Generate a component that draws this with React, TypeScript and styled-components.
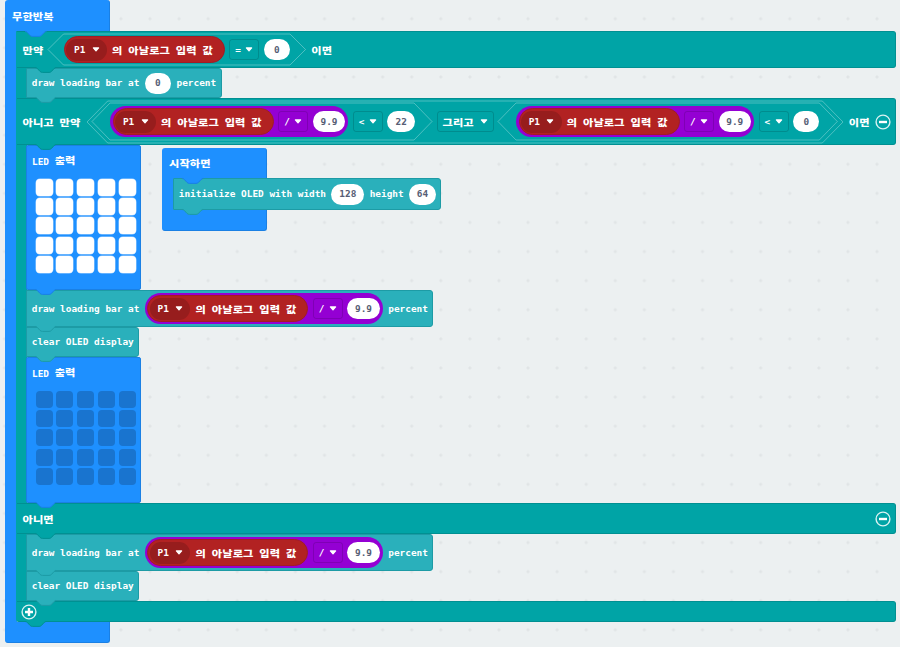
import * as React from 'react';
import styled, { createGlobalStyle } from 'styled-components';

const colors = {
  basic: '#1e90ff',
  basicEdge: '#1a80e4',
  logic: '#00a4a6',
  logicEdge: '#009092',
  oled: '#2ab0bb',
  oledEdge: '#1d9ba5',
  pins: '#b22222',
  math: '#9400d3',
};

const GlobalStyle = createGlobalStyle`
  body {
    margin: 0;
    overflow: hidden;
  }
  * {
    box-sizing: border-box;
  }
`;

const Workspace = styled.main`
  position: relative;
  width: 900px;
  height: 647px;
  overflow: hidden;
  background: #ecf0f1;
  font-family: 'DejaVu Sans Mono', 'Noto Sans CJK KR', monospace;
  font-size: 9.42px;
  font-weight: 700;
  line-height: 12px;
  color: #fff;
  white-space: pre;
`;

const Grid = styled.svg`
  position: absolute;
  inset: 0;
`;

const Script = styled.section<{ $x: number; $y: number }>`
  position: absolute;
  left: ${(props) => props.$x}px;
  top: ${(props) => props.$y}px;
`;

const HatBlock = styled.header<{ $height: number }>`
  display: flex;
  align-items: center;
  position: relative;
  width: 105px;
  height: ${(props) => props.$height}px;
  padding-left: 7px;
  background: ${colors.basic};
  border-right: 1px solid ${colors.basicEdge};
  border-radius: 3px 3px 0 0;
`;

const HatFoot = styled.footer`
  width: 105px;
  height: 21px;
  background: ${colors.basic};
  border: 1px solid ${colors.basicEdge};
  border-top: none;
  border-left-color: ${colors.basic};
  border-radius: 0 0 3px 3px;
`;

const Mouth = styled.div<{ $color: string; $arm: number }>`
  display: flex;
  flex-direction: column;
  align-items: flex-start;
  padding-left: ${(props) => props.$arm}px;
  background: linear-gradient(${(props) => props.$color}, ${(props) => props.$color})
    0 0 / ${(props) => props.$arm + 1}px 100% no-repeat;
`;

const LogicRow = styled.div<{ $height: number }>`
  display: flex;
  align-items: center;
  position: relative;
  width: 880px;
  height: ${(props) => props.$height}px;
  padding: 0 4.5px 0 5.5px;
  background: ${colors.logic};
  border: 1px solid ${colors.logicEdge};
  border-left-color: ${colors.logic};
  border-radius: 0 3px 3px 0;
`;

const Statement = styled.div<{ $height: number }>`
  display: flex;
  align-items: center;
  gap: 5.3px;
  position: relative;
  height: ${(props) => props.$height}px;
  padding: 0 4.4px 0 4.8px;
  background: ${colors.oled};
  border: 1px solid ${colors.oledEdge};
  border-radius: 1px 3px 3px 1px;
`;

const LedBlock = styled.div<{ $height: number }>`
  position: relative;
  width: 115px;
  height: ${(props) => props.$height}px;
  padding: 8px 0 0 5px;
  background: ${colors.basic};
  border: 1px solid ${colors.basicEdge};
  border-radius: 2px;
`;

const LedGrid = styled.div`
  display: grid;
  grid-template-columns: repeat(5, 17px);
  grid-auto-rows: 17px;
  gap: 2.4px 3.75px;
  margin: 10.5px 0 0 3.7px;
`;

const Led = styled.span<{ $on?: boolean }>`
  border-radius: 4px;
  background: ${(props) => (props.$on ? '#fff' : '#1974cf')};
  box-shadow: ${(props) => (props.$on ? '0 0 0 0.5px #a9d4ff' : 'none')};
`;

const Korean = styled.span`
  display: inline-block;
  font-family: 'Noto Sans CJK KR', sans-serif;
  font-size: 11.2px;
  font-weight: 900;
  letter-spacing: 0.1px;
  word-spacing: 3.2px;
  transform: scaleY(0.82);
`;

const Reporter = styled.span<{ $color: string; $height: number }>`
  display: flex;
  align-items: center;
  gap: 4.5px;
  height: ${(props) => props.$height}px;
  border-radius: 16px;
  background: ${(props) => props.$color};
`;

const MathReporter = styled(Reporter)`
  width: 238.3px;
  padding-left: 2.6px;
`;

const PinReporter = styled(Reporter)`
  width: 161px;
  padding-left: 1.5px;
  gap: 5.3px;
  border: 1px solid #a11c26;
`;

const PinField = styled.span`
  display: flex;
  align-items: center;
  gap: 6.3px;
  width: 40.5px;
  height: 22px;
  padding-left: 7.7px;
  border-radius: 11px;
  background: #971d1d;
`;

const Operator = styled.span<{ $width?: number }>`
  display: flex;
  align-items: center;
  justify-content: space-between;
  width: ${(props) => props.$width ?? 30}px;
  height: 21px;
  padding: 0 5px;
  border: 1px solid rgba(0, 0, 0, 0.14);
  border-radius: 3px;
`;

const NumberInput = styled.span<{ $width: number }>`
  display: flex;
  align-items: center;
  justify-content: center;
  width: ${(props) => props.$width}px;
  height: 21px;
  border-radius: 11px;
  background: #fff;
  color: #575e75;
`;

const HexBox = styled.span<{ $width: number; $height: number; $pad: number }>`
  display: flex;
  align-items: center;
  gap: 4.4px;
  position: relative;
  flex-shrink: 0;
  width: ${(props) => props.$width}px;
  height: ${(props) => props.$height}px;
  padding-left: ${(props) => props.$pad}px;
`;

const HexOutline = styled.svg`
  position: absolute;
  inset: 0;
  overflow: visible;
  pointer-events: none;
`;

const NotchShape = styled.svg<{ $left: number }>`
  position: absolute;
  z-index: 1;
  left: ${(props) => props.$left}px;
  top: 100%;
  overflow: visible;
`;

const Toggle = styled.svg`
  display: block;
  flex-shrink: 0;
`;

const Spacer = styled.span<{ $width?: number }>`
  flex: ${(props) => (props.$width ? `0 0 ${props.$width}px` : '1')};
`;

const FooterRow = styled(LogicRow)`
  padding-left: 4px;
  border-radius: 0 3px 3px 3px;
`;

type NotchProps = { left?: number; fill: string; edge: string };

const Notch = ({ left = 8, fill, edge }: NotchProps) => (
  <NotchShape $left={left} width="22" height="6" viewBox="0 0 22 6">
    <path d="M0 -1 L1 .3 L5 4.4 Q6 5.4 7.5 5.4 H14 Q15.5 5.4 16.5 4.4 L20.5 .3 L22 -1 Z" fill={fill} />
    <path
      d="M0 .5 Q1.5 .5 2.5 1.6 L5 4.4 Q6 5.4 7.5 5.4 H14 Q15.5 5.4 16.5 4.4 L19 1.6 Q20 .5 21.5 .5"
      fill="none"
      stroke={edge}
    />
  </NotchShape>
);

const Caret = () => (
  <svg width="8" height="5" viewBox="0 0 8 5">
    <path d="M1.4 .9H6.6L4 3.7Z" fill="#fff" stroke="#fff" strokeWidth="1.3" strokeLinejoin="round" />
  </svg>
);

type HexagonProps = {
  width: number;
  height: number;
  tip: number;
  pad?: number;
  children: React.ReactNode;
};

const Hexagon = ({ width, height, tip, pad = tip, children }: HexagonProps) => (
  <HexBox $width={width} $height={height} $pad={pad}>
    <HexOutline width={width} height={height}>
      <path
        d={`M0 ${height / 2}L${tip} 0H${width - tip}L${width} ${height / 2}L${width - tip} ${height}H${tip}Z`}
        fill="none"
        stroke="#fff"
        strokeOpacity="0.3"
      />
    </HexOutline>
    {children}
  </HexBox>
);

const AnalogRead = () => (
  <PinReporter $color={colors.pins} $height={27}>
    <PinField>
      P1
      <Caret />
    </PinField>
    <Korean>의 아날로그 입력 값</Korean>
  </PinReporter>
);

const AnalogDivided = () => (
  <MathReporter $color={colors.math} $height={31}>
    <AnalogRead />
    <Operator>
      /<Caret />
    </Operator>
    <NumberInput $width={32.5}>9.9</NumberInput>
  </MathReporter>
);

const Comparison = ({ value, width }: { value: string; width: number }) => (
  <>
    <AnalogDivided />
    <Operator>
      {'<'}
      <Caret />
    </Operator>
    <NumberInput $width={width}>{value}</NumberInput>
  </>
);

const ToggleIcon = ({ plus }: { plus?: boolean }) => (
  <Toggle width="16" height="16" viewBox="0 0 16 16">
    <circle cx="8" cy="8" r="6.9" fill="none" stroke="#d9f2f2" strokeWidth="1.4" />
    <path d={plus ? 'M4 8H12M8 4V12' : 'M4 8H12'} stroke="#fff" strokeWidth="2.4" />
  </Toggle>
);

const LedDisplay = ({ on, height }: { on?: boolean; height: number }) => (
  <LedBlock $height={height}>
    LED <Korean>출력</Korean>
    <LedGrid>
      {Array.from({ length: 25 }, (_, i) => (
        <Led key={i} $on={on} />
      ))}
    </LedGrid>
    <Notch fill={colors.basic} edge={colors.basicEdge} />
  </LedBlock>
);

const DrawAnalogBar = () => (
  <Statement $height={37}>
    draw loading bar at
    <AnalogDivided />
    percent
    <Notch fill={colors.oled} edge={colors.oledEdge} />
  </Statement>
);

const ClearDisplay = ({ height }: { height: number }) => (
  <Statement $height={height}>
    clear OLED display
    <Notch fill={colors.oled} edge={colors.oledEdge} />
  </Statement>
);

const LogicNotch = ({ left = 18 }: { left?: number }) => (
  <Notch left={left} fill={colors.logic} edge={colors.logicEdge} />
);

const ConditionBlock = () => (
  <div>
    <LogicRow $height={37}>
      <Korean>만약</Korean>
      <Spacer $width={5} />
      <Hexagon width={257.5} height={31} tip={15.5}>
        <AnalogRead />
        <Operator>
          =<Caret />
        </Operator>
        <NumberInput $width={26.5}>0</NumberInput>
      </Hexagon>
      <Spacer $width={5.5} />
      <Korean>이면</Korean>
      <LogicNotch />
    </LogicRow>
    <Mouth $color={colors.logic} $arm={10}>
      <Statement $height={30}>
        draw loading bar at
        <NumberInput $width={26.5}>0</NumberInput>
        percent
        <Notch fill={colors.oled} edge={colors.oledEdge} />
      </Statement>
    </Mouth>
    <LogicRow $height={47}>
      <Korean>아니고 만약</Korean>
      <Spacer $width={6.8} />
      <Hexagon width={756} height={42} tip={20.7} pad={5}>
        <Hexagon width={340} height={37} tip={18}>
          <Comparison value="22" width={28} />
        </Hexagon>
        <Operator $width={57}>
          <Korean>그리고</Korean>
          <Caret />
        </Operator>
        <Hexagon width={339.3} height={37} tip={18}>
          <Comparison value="0" width={26.5} />
        </Hexagon>
      </Hexagon>
      <Spacer $width={5.7} />
      <Korean>이면</Korean>
      <Spacer />
      <ToggleIcon />
      <LogicNotch />
    </LogicRow>
    <Mouth $color={colors.logic} $arm={10}>
      <LedDisplay on height={145} />
      <DrawAnalogBar />
      <ClearDisplay height={30} />
      <LedDisplay height={146} />
    </Mouth>
    <LogicRow $height={31}>
      <Korean>아니면</Korean>
      <Spacer />
      <ToggleIcon />
      <LogicNotch />
    </LogicRow>
    <Mouth $color={colors.logic} $arm={10}>
      <DrawAnalogBar />
      <ClearDisplay height={30} />
    </Mouth>
    <FooterRow $height={21}>
      <ToggleIcon plus />
      <LogicNotch left={8} />
    </FooterRow>
  </div>
);

const GridDots = () => (
  <Grid width="900" height="647">
    <defs>
      <pattern id="dots" x="-9.9" y="4.2" width="29.08" height="29.1" patternUnits="userSpaceOnUse">
        <path d="M12.8 14.5H16.2M14.5 12.8V16.2" stroke="#dde1e3" strokeWidth="1" />
      </pattern>
    </defs>
    <rect width="900" height="647" fill="url(#dots)" />
  </Grid>
);

export default function App() {
  return (
    <>
      <GlobalStyle />
      <Workspace>
        <GridDots />
        <Script $x={5} $y={0}>
          <HatBlock $height={31}>
            <Korean>무한반복</Korean>
            <Notch left={20} fill={colors.basic} edge={colors.basicEdge} />
          </HatBlock>
          <Mouth $color={colors.basic} $arm={11}>
            <ConditionBlock />
          </Mouth>
          <HatFoot />
        </Script>
        <Script $x={162} $y={148}>
          <HatBlock $height={30}>
            <Korean>시작하면</Korean>
            <Notch left={20} fill={colors.basic} edge={colors.basicEdge} />
          </HatBlock>
          <Mouth $color={colors.basic} $arm={11}>
            <Statement $height={32}>
              initialize OLED with width
              <NumberInput $width={33}>128</NumberInput>
              height
              <NumberInput $width={27}>64</NumberInput>
              <Notch fill={colors.oled} edge={colors.oledEdge} />
            </Statement>
          </Mouth>
          <HatFoot />
        </Script>
      </Workspace>
    </>
  );
}
